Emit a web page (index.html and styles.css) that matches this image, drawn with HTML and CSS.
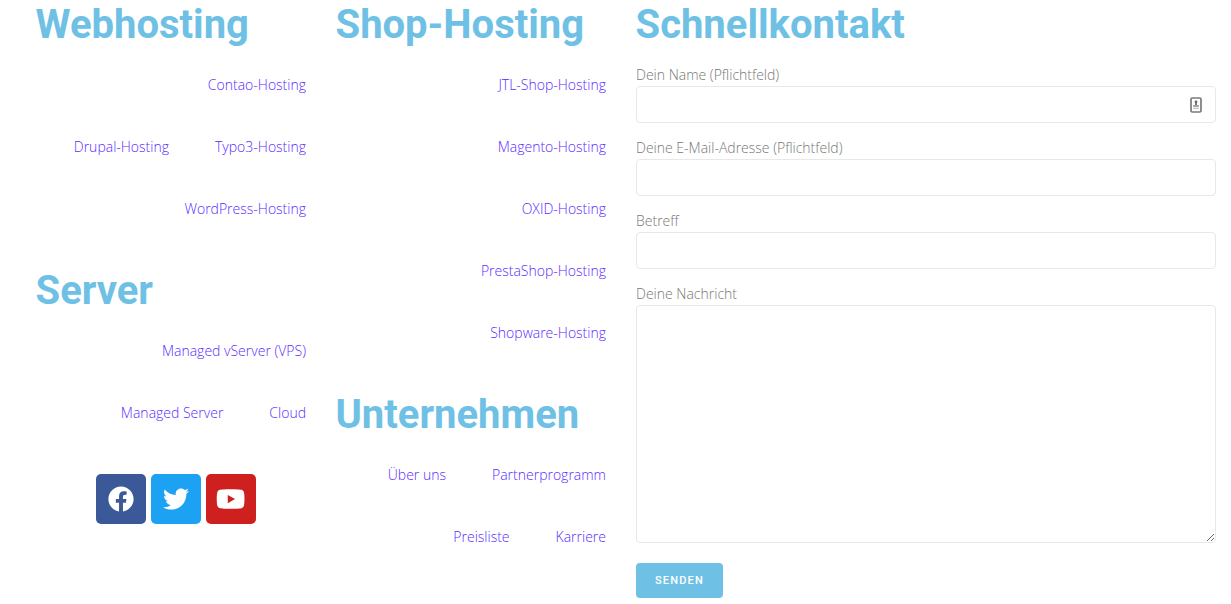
FILE: index.html
```html
<!DOCTYPE html>
<html lang="de">
<head>
<meta charset="utf-8">
<title>Footer</title>
<link rel="stylesheet" href="styles.css">
</head>
<body>
<div class="grid">
  <div class="col">
    <h2 class="title">Webhosting</h2>
    <div class="links">
      <ul class="row"><li><a href="#">Contao-Hosting</a></li></ul>
      <ul class="row"><li><a href="#">Drupal-Hosting</a></li><li><a href="#">Typo3-Hosting</a></li></ul>
      <ul class="row"><li><a href="#">WordPress-Hosting</a></li></ul>
    </div>
    <h2 class="title">Server</h2>
    <div class="links">
      <ul class="row"><li><a href="#">Managed vServer (VPS)</a></li></ul>
      <ul class="row"><li><a href="#">Managed Server</a></li><li><a href="#">Cloud</a></li></ul>
    </div>
    <div class="social">
      <a href="#" class="soc fb" aria-label="Facebook"><svg class="ic-fb" viewBox="0 0 512 512"><path d="M504 256C504 119 393 8 256 8S8 119 8 256c0 123.78 90.69 226.38 209.25 245V327.69h-63V256h63v-54.64c0-62.15 37-96.48 93.67-96.48 27.14 0 55.52 4.84 55.52 4.84v61h-31.28c-30.8 0-40.41 19.12-40.41 38.73V256h68.78l-11 71.69h-57.78V501C413.31 482.38 504 379.78 504 256z"/></svg></a>
      <a href="#" class="soc tw" aria-label="Twitter"><svg class="ic-fb" viewBox="0 0 512 512"><path d="M459.37 151.716c.325 4.548.325 9.097.325 13.645 0 138.72-105.583 298.558-298.558 298.558-59.452 0-114.68-17.219-161.137-47.106 8.447.974 16.568 1.299 25.34 1.299 49.055 0 94.213-16.568 130.274-44.832-46.132-.975-84.792-31.188-98.112-72.772 6.498.974 12.995 1.624 19.818 1.624 9.421 0 18.843-1.3 27.614-3.573-48.081-9.747-84.143-51.98-84.143-102.985v-1.299c13.969 7.797 30.214 12.67 47.431 13.319-28.264-18.843-46.781-51.005-46.781-87.391 0-19.492 5.197-37.36 14.294-52.954 51.655 63.675 129.3 105.258 216.365 109.807-1.624-7.797-2.599-15.918-2.599-24.04 0-57.828 46.782-104.934 104.934-104.934 30.213 0 57.502 12.67 76.67 33.137 23.715-4.548 46.456-13.32 66.599-25.34-7.798 24.366-24.366 44.833-46.132 57.827 21.117-2.273 41.584-8.122 60.426-16.243-14.292 20.791-32.161 39.308-52.628 54.253z"/></svg></a>
      <a href="#" class="soc yt" aria-label="YouTube"><svg class="ic-yt" viewBox="0 0 576 512"><path d="M549.655 124.083c-6.281-23.65-24.787-42.276-48.284-48.597C458.781 64 288 64 288 64S117.22 64 74.629 75.486c-23.497 6.322-42.003 24.947-48.284 48.597-11.412 42.867-11.412 132.305-11.412 132.305s0 89.438 11.412 132.305c6.281 23.65 24.787 41.5 48.284 47.821C117.22 448 288 448 288 448s170.78 0 213.371-11.486c23.497-6.321 42.003-24.171 48.284-47.821 11.412-42.867 11.412-132.305 11.412-132.305s0-89.438-11.412-132.305zm-317.51 213.508V175.185l142.739 81.205-142.739 81.201z"/></svg></a>
    </div>
  </div>
  <div class="col">
    <h2 class="title">Shop-Hosting</h2>
    <div class="links">
      <ul class="row"><li><a href="#">JTL-Shop-Hosting</a></li></ul>
      <ul class="row"><li><a href="#">Magento-Hosting</a></li></ul>
      <ul class="row"><li><a href="#">OXID-Hosting</a></li></ul>
      <ul class="row"><li><a href="#">PrestaShop-Hosting</a></li></ul>
      <ul class="row"><li><a href="#">Shopware-Hosting</a></li></ul>
    </div>
    <h2 class="title">Unternehmen</h2>
    <div class="links">
      <ul class="row"><li><a href="#">Über uns</a></li><li><a href="#">Partnerprogramm</a></li></ul>
      <ul class="row"><li><a href="#">Preisliste</a></li><li><a href="#">Karriere</a></li></ul>
    </div>
  </div>
  <div class="col">
    <h2 class="title">Schnellkontakt</h2>
    <form class="form">
      <label class="field"><span class="lab">Dein Name (Pflichtfeld)</span>
        <span class="inwrap"><input class="inp" type="text">
          <svg class="contact" viewBox="0 0 12 16"><rect x="1" y="1" width="10" height="14" rx="1.2" fill="none" stroke="#7a7a7a" stroke-width="1.7"/><circle cx="6" cy="5" r="1.4" fill="#666"/><rect x="5" y="5.5" width="2" height="2.5" fill="#777"/><rect x="3.2" y="8" width="5.6" height="2" fill="#a5a5a5"/><rect x="3.2" y="10.6" width="5.6" height="1.6" fill="#c8c8c8"/></svg>
        </span>
      </label>
      <label class="field"><span class="lab">Deine E-Mail-Adresse (Pflichtfeld)</span><input class="inp" type="email"></label>
      <label class="field"><span class="lab">Betreff</span><input class="inp" type="text"></label>
      <label class="field"><span class="lab">Deine Nachricht</span><textarea class="area"></textarea></label>
      <button class="send" type="button">SENDEN</button>
    </form>
  </div>
</div>
</body>
</html>
```
FILE: styles.css
```css
* { box-sizing: border-box; }
html, body { margin: 0; padding: 0; background: #fff; }
body { font-family: "Open Sans", sans-serif; overflow: hidden; height: 604px; }
.grid {
  display: grid;
  grid-template-columns: 270px 270px 580px;
  column-gap: 30px;
  padding-left: 36px;
}
.title {
  margin: 26px 0 6px;
  padding-top: 1px;
  height: 48px;
  font-family: Roboto, sans-serif;
  font-weight: 700;
  font-size: 40px;
  line-height: 48px;
  color: #6ec1e4;
  text-indent: -0.5px;
}
.col > .title:first-child { margin-top: 0; }
.row {
  list-style: none;
  margin: 0;
  padding: 0;
  height: 62px;
  display: flex;
  align-items: center;
  justify-content: flex-end;
  column-gap: 46px;
}
.row li { display: flex; }
.row a {
  font-size: 14px;
  font-weight: 300;
  line-height: 20px;
  color: #5b2bff;
  text-decoration: none;
}
.social {
  display: flex;
  justify-content: center;
  gap: 5px;
  margin-top: 30px;
  padding-left: 10px;
}
.soc {
  width: 50px;
  height: 50px;
  border-radius: 5px;
  display: flex;
  align-items: center;
  justify-content: center;
}
.soc svg { fill: #fff; display: block; }
.ic-fb { width: 26px; height: 26px; }
.ic-yt { width: 29.25px; height: 26px; }
.fb { background: #3b5998; }
.tw { background: #1da1f2; }
.yt { background: #cd201f; }
.form { display: flex; flex-direction: column; }
.field { display: block; margin-bottom: 16px; }
.field:first-child { margin-top: 12px; }
.lab {
  display: block;
  height: 20px;
  font-size: 14px;
  font-weight: 300;
  line-height: 18px;
  color: #777;
}
.inwrap { display: block; position: relative; }
.inp, .area {
  display: block;
  width: 100%;
  border: 1px solid #e8e8e8;
  border-radius: 4px;
  background: #fff;
  margin: 0;
  padding: 6px 12px;
}
.inp { height: 37px; }
.area { height: 238px; resize: vertical; }
.contact {
  position: absolute;
  right: 14px;
  top: 11px;
  width: 12px;
  height: 16px;
}
.field:last-of-type { margin-bottom: 20px; }
.send {
  width: 87px;
  height: 35px;
  border: 0;
  border-radius: 4px;
  background: #6ec1e4;
  color: #fff;
  font-family: Roboto, sans-serif;
  font-size: 11px;
  font-weight: 500;
  letter-spacing: 1.2px;
  padding: 0;
}
```
